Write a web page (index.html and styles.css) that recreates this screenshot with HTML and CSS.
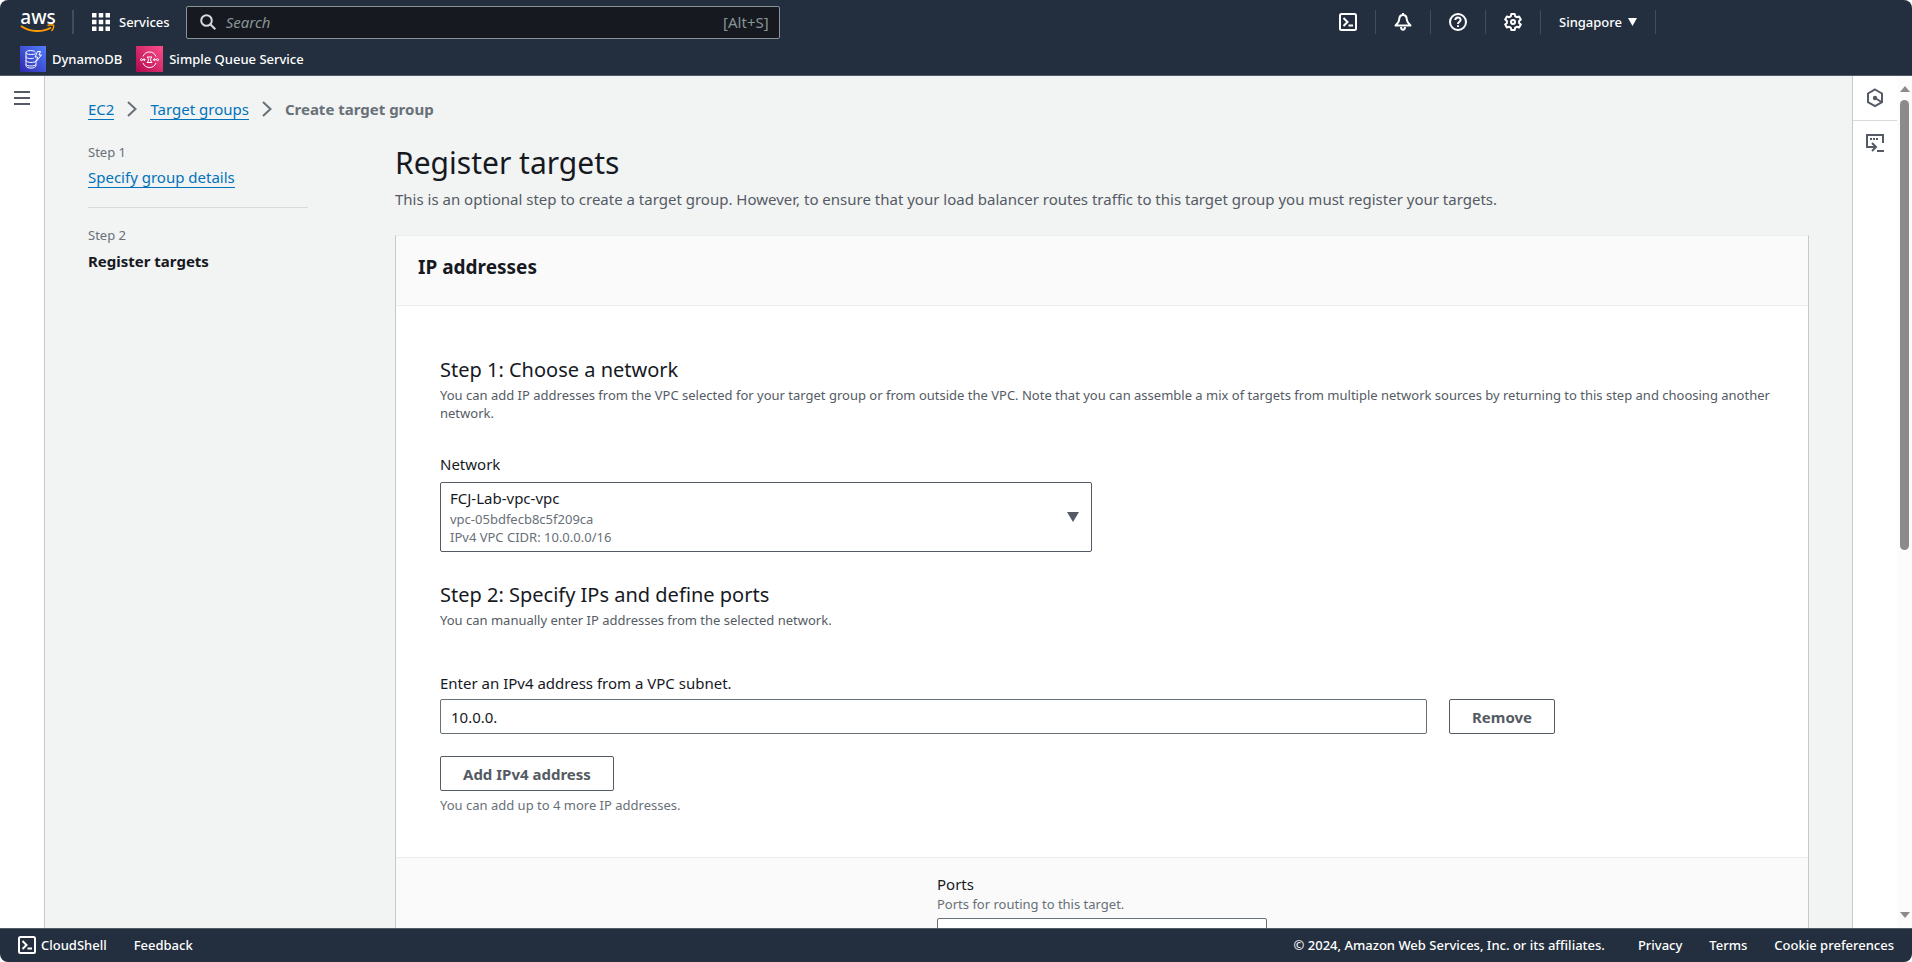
FILE: index.html
```html
<!DOCTYPE html>
<html lang="en">
<head>
<meta charset="utf-8">
<title>Create target group | EC2</title>
<link rel="stylesheet" href="styles.css">
</head>
<body>
<div class="app">
  <header class="header">
    <div class="navbar">
      <a class="logo" href="#" aria-label="aws home">
        <span class="logo-word">aws</span>
        <svg class="logo-smile" width="36" height="10" viewBox="0 0 36 10" fill="none" stroke="#ff9900"><path d="M1 2C10 8.500 23 8.500 31 3.500" stroke-width="2"/><path d="M27.500 1.500C30 .8 32.500.8 33.500 1.200C34 3 33 5.500 31.500 7" stroke-width="1.500"/></svg>
      </a>
      <button class="services" type="button">
        <svg width="18" height="18" viewBox="0 0 18 18" fill="#fff"><path d="M0 0h4.500v4.500H0zM6.750 0h4.500v4.500h-4.500zM13.500 0H18v4.500h-4.500zM0 6.750h4.500v4.500H0zM6.750 6.750h4.500v4.500h-4.500zM13.500 6.750H18v4.500h-4.500zM0 13.500h4.500V18H0zM6.750 13.500h4.500V18h-4.500zM13.500 13.500H18V18h-4.500z"/></svg>
        Services
      </button>
      <label class="search">
        <svg width="16" height="16" viewBox="0 0 16 16" fill="none" stroke="#d5dbdb" stroke-width="2"><circle cx="6.500" cy="6.500" r="5.300"/><path d="M10.300 10.300L15.300 15.300"/></svg>
        <input class="search-input" type="search" placeholder="Search" aria-label="Search">
        <span class="search-key">[Alt+S]</span>
      </label>
      <div class="tools">
        <button class="tool" type="button" aria-label="CloudShell"><svg width="18" height="18" viewBox="0 0 18 18" fill="none" stroke="#fff" stroke-width="2"><rect x="1" y="1" width="16" height="16" rx="1.500"/><path d="M4.500 5L8.500 9L4.500 13M9.500 12.500H14"/></svg></button>
        <button class="tool" type="button" aria-label="Notifications"><svg width="18" height="18" viewBox="0 0 18 18" fill="none" stroke="#fff" stroke-width="2" stroke-linejoin="round"><path d="M9 0V3M9 2C6.500 2 5.300 3.800 5.200 6.500C5 9 4.300 9.800 1.500 12.500H16.500C13.700 9.800 13 9 12.800 6.500C12.700 3.800 11.500 2 9 2ZM7 14C7.200 17.700 10.800 17.700 11 14"/></svg></button>
        <button class="tool" type="button" aria-label="Help"><svg width="18" height="18" viewBox="0 0 18 18" fill="none" stroke="#fff" stroke-width="2"><circle cx="9" cy="9" r="8"/><path d="M6.300 7C6.400 3.500 11.700 3.700 11.600 7C11.500 8.800 9 8.700 9 11M9 12.200V14"/></svg></button>
        <button class="tool" type="button" aria-label="Settings"><svg width="18" height="18" viewBox="0 0 18 18" fill="none" stroke="#fff" stroke-width="2" stroke-linejoin="round"><path d="M7.300 1H10.700L11.200 3.300L12.800 4.200L15.100 3.500L16.800 6.400L15.100 8V10L16.800 11.600L15.100 14.500L12.800 13.800L11.200 14.700L10.700 17H7.300L6.800 14.700L5.200 13.800L2.900 14.500L1.200 11.600L2.900 10V8L1.200 6.400L2.900 3.500L5.200 4.200L6.800 3.300Z"/><circle cx="9" cy="9" r="2"/></svg></button>
        <button class="region" type="button">Singapore <svg width="9" height="8" viewBox="0 0 9 8" fill="#fff"><path d="M0 0H9L4.500 8z"/></svg></button>
      </div>
    </div>
    <nav class="favorites" aria-label="Favorites">
      <a class="favorite" href="#">
        <svg width="26" height="26" viewBox="0 0 26 26" fill="none" stroke="#fff"><defs><linearGradient id="db" x1="0" y1="1" x2="1" y2="0"><stop stop-color="#2e27ad"/><stop offset="1" stop-color="#527fff"/></linearGradient></defs><path fill="url(#db)" stroke="none" d="M0 0h26v26H0z"/><path d="M15.500 6C14 4 6 4 6 6.500S14 9 15.500 7.500M6 6.500V19.500C6 23 16 23 16 19.500V14.500M6 10.500C6.500 13 13 13 14 12M6 14.500C6.500 17 15 17 16 15M6 18.500C6.500 20.500 15 20.500 16 18.500"/><path d="M17.500 5.500H20.500L19 9H21.500L16.500 15L17.500 11H15Z"/></svg>
        DynamoDB</a>
      <a class="favorite" href="#">
        <svg width="27" height="26" viewBox="0 0 27 26" fill="none" stroke="#fff"><defs><linearGradient id="sq" x1="0" y1="1" x2="1" y2="0"><stop stop-color="#b0084d"/><stop offset="1" stop-color="#ff4f8b"/></linearGradient></defs><path fill="url(#sq)" stroke="none" d="M0 0h27v26H0z"/><path d="M7 10.500C9 4.500 18 4.500 20 10.500M7 17C9 23 18 23 20 17M6.500 13.700H9M7.800 12.300L9.200 13.700L7.800 15.100M17.500 13.700H20M18.800 12.300L17.400 13.700L18.800 15.100"/><circle cx="5.500" cy="13.700" r="1"/><circle cx="21.500" cy="13.700" r="1"/><path d="M11 11H16L14.700 12.500V15L16 16.500H11L12.300 15V12.500Z"/></svg>
        Simple Queue Service</a>
    </nav>
  </header>

  <div class="body">
    <aside class="rail rail-left">
      <button class="rail-button" type="button" aria-label="Open navigation"><svg width="16" height="14" viewBox="0 0 16 14" stroke="#545b64" stroke-width="2"><path d="M0 1H16M0 7H16M0 13H16"/></svg></button>
    </aside>

    <main class="main">
      <nav class="crumbs" aria-label="Breadcrumb">
        <a class="link" href="#">EC2</a>
        <svg width="10" height="16" viewBox="0 0 10 16" fill="none" stroke="#687078" stroke-width="2"><path d="M1 1L8.500 8L1 15"/></svg>
        <a class="link" href="#">Target groups</a>
        <svg width="10" height="16" viewBox="0 0 10 16" fill="none" stroke="#687078" stroke-width="2"><path d="M1 1L8.500 8L1 15"/></svg>
        <span class="crumb-current">Create target group</span>
      </nav>
      <div class="columns">
        <ol class="steps">
          <li class="step"><span class="step-number">Step 1</span><a class="link" href="#">Specify group details</a></li>
          <li class="step"><span class="step-number">Step 2</span><strong class="step-current">Register targets</strong></li>
        </ol>
        <div class="content">
          <h1 class="title">Register targets</h1>
          <p class="intro">This is an optional step to create a target group. However, to ensure that your load balancer routes traffic to this target group you must register your targets.</p>
          <section class="card">
            <h2 class="card-header">IP addresses</h2>
            <div class="card-body">
              <h3 class="subtitle">Step 1: Choose a network</h3>
              <p class="hint">You can add IP addresses from the VPC selected for your target group or from outside the VPC. Note that you can assemble a mix of targets from multiple network sources by returning to this step and choosing another network.</p>
              <label class="label label-network" for="network">Network</label>
              <div class="picker">
                <select class="picker-select" id="network"><option>FCJ-Lab-vpc-vpc</option></select>
                <div class="picker-value">
                  <span class="picker-name">FCJ-Lab-vpc-vpc</span>
                  <span class="picker-meta">vpc-05bdfecb8c5f209ca</span>
                  <span class="picker-meta">IPv4 VPC CIDR: 10.0.0.0/16</span>
                </div>
                <svg class="picker-arrow" width="12" height="10" viewBox="0 0 12 10" fill="#545b64"><path d="M0 0H12L6 10z"/></svg>
              </div>
              <h3 class="subtitle subtitle-ports">Step 2: Specify IPs and define ports</h3>
              <p class="hint">You can manually enter IP addresses from the selected network.</p>
              <label class="label label-address" for="address">Enter an IPv4 address from a VPC subnet.</label>
              <div class="address-row">
                <input class="input" id="address" type="text" value="10.0.0.">
                <div><button class="button" type="button">Remove</button></div>
              </div>
              <button class="button button-add" type="button">Add IPv4 address</button>
              <p class="hint hint-add">You can add up to 4 more IP addresses.</p>
            </div>
            <div class="card-footer">
              <div class="ports">
                <label class="label" for="ports">Ports</label>
                <p class="hint hint-muted">Ports for routing to this target.</p>
                <input class="input" id="ports" type="text">
              </div>
            </div>
          </section>
        </div>
      </div>
    </main>

    <aside class="rail rail-right">
      <button class="rail-button rail-tool" type="button" aria-label="Info"><svg width="18" height="20" viewBox="0 0 18 20" fill="none" stroke="#545b64" stroke-width="2"><path d="M9 1.500L16 5.500V14.200L9 18.200L2 14.200V5.500Z"/><circle cx="9" cy="10" r="2.200" fill="#545b64" stroke="none"/><path d="M9 10L15.500 14"/></svg></button>
      <button class="rail-button rail-tool" type="button" aria-label="Console to code"><svg width="18" height="20" viewBox="0 0 18 20" fill="none" stroke="#545b64" stroke-width="2"><path d="M17 10V2H1V14H9M6 10L10 14L6 18M11 18H18"/><path d="M4 6H13" stroke-dasharray="2 1"/></svg></button>
    </aside>
    <div class="scrollbar">
      <svg width="10" height="6" viewBox="0 0 10 6" fill="#8b8b8b"><path d="M0 6L5 0L10 6z"/></svg>
      <div class="track"><div class="thumb"></div></div>
      <svg width="10" height="6" viewBox="0 0 10 6" fill="#8b8b8b"><path d="M0 0H10L5 6z"/></svg>
    </div>
  </div>

  <footer class="footer">
    <button class="footer-button" type="button"><svg width="18" height="18" viewBox="0 0 18 18" fill="none" stroke="#fff" stroke-width="2"><rect x="1" y="1" width="16" height="16" rx="1.500"/><path d="M4.500 5L8.500 9L4.500 13M9.500 12.500H14"/></svg>CloudShell</button>
    <a class="footer-link" href="#">Feedback</a>
    <span class="copyright">© 2024, Amazon Web Services, Inc. or its affiliates.</span>
    <a class="footer-link" href="#">Privacy</a>
    <a class="footer-link" href="#">Terms</a>
    <a class="footer-link" href="#">Cookie preferences</a>
  </footer>
</div>
</body>
</html>
```
FILE: styles.css
```css
* { box-sizing: border-box; }
body, h1, h2, h3, p, ol { margin: 0; padding: 0; }
body { background: #fff; color: #16191f; font: 15px/22px "Noto Sans", "Open Sans", sans-serif; }
button, input, select { font: inherit; }
svg { display: block; flex: none; }
a { text-decoration: none; }

.app { display: flex; flex-direction: column; height: 100vh; overflow: hidden; border-radius: 8px; }

/* Header */
.header { flex: none; background: #232f3e; border-bottom: 1px solid #545b64; color: #fff; font-size: 13px; font-weight: 500; line-height: 18px; }
.navbar { display: flex; align-items: center; height: 44px; padding-left: 20px; }
.logo { display: flex; flex-direction: column; justify-content: center; height: 24px; padding-right: 16px; border-right: 2px solid #414d5c; color: #fff; }
.logo-word { font: 500 19px/14px "Noto Sans", sans-serif; text-align: center; }
.services { display: flex; align-items: center; gap: 9px; margin-left: 18px; padding: 0; border: 0; background: none; color: inherit; }
.search { display: flex; align-items: center; gap: 8px; width: 594px; height: 33px; margin-left: 16px; padding: 0 10px 0 13px; border: 1px solid #879596; border-radius: 2px; background: #16191f; color: #879596; font-size: 15px; font-weight: 400; }
.search-input { flex: 1; min-width: 0; padding: 0 2px; border: 0; outline: 0; background: none; color: #fff; }
.search-input::placeholder { color: #879596; font-style: italic; opacity: 1; }
.tools { display: flex; align-items: center; margin-left: auto; margin-right: 256px; }
.tool { display: flex; justify-content: center; width: 55px; padding: 3px 0; border: 0; border-right: 1px solid #414d5c; background: none; }
.region { display: flex; align-items: center; gap: 6px; height: 24px; padding: 0 18px; border: 0; border-right: 1px solid #414d5c; background: none; color: inherit; }
.favorites { display: flex; align-items: center; gap: 14px; height: 31px; padding: 0 20px 1px; }
.favorite { display: flex; align-items: center; gap: 6px; color: #fff; }

/* Page frame */
.body { display: flex; flex: 1; min-height: 0; background: #f2f3f3; }
.rail { flex: none; width: 45px; background: #fff; }
.rail-left { border-right: 1px solid #c6cacb; }
.rail-right { border-left: 1px solid #c6cacb; }
.rail-button { display: flex; align-items: center; justify-content: center; width: 100%; height: 44px; padding: 0; border: 0; background: none; }
.rail-tool:first-child { height: 45px; border-bottom: 1px solid #d5dbdb; }
.scrollbar { display: flex; flex: none; flex-direction: column; align-items: center; gap: 8px; width: 15px; padding: 10px 0; background: #fcfcfc; }
.track { flex: 1; width: 9px; }
.thumb { height: 56%; border-radius: 5px; background: #8b8b8b; }
.main { flex: 1; min-width: 0; padding: 21px 43px 0; overflow: hidden; }

.link { color: #0073bb; border-bottom: 1px solid #0073bb; line-height: 20px; }
.crumbs { display: flex; align-items: center; gap: 13px; height: 24px; color: #687078; }
.crumb-current { font-weight: 700; }
.columns { display: flex; gap: 87px; margin-top: 20px; }
.steps { flex: none; width: 220px; list-style: none; }
.step { display: flex; flex-direction: column; align-items: flex-start; gap: 4px; }
.step + .step { margin-top: 19px; padding-top: 16px; border-top: 1px solid #d5dbdb; }
.step-number { color: #687078; font-size: 13px; line-height: 22px; }
.content { flex: 1; min-width: 0; }
.title { font-size: 30px; font-weight: 400; line-height: 44px; }
.intro { margin-top: 3px; color: #545b64; }

.card { margin-top: 25px; border: 1px solid #c6cacb; border-top-color: #eaeded; background: #fff; }
.card-header { padding: 20px 22px 27px; border-bottom: 1px solid #eaeded; background: #fafafa; font-size: 19px; font-weight: 700; line-height: 22px; }
.card-body { padding: 51px 30px 43px 44px; }
.subtitle { margin-bottom: 3px; font-size: 20px; font-weight: 400; line-height: 26px; }
.subtitle-ports { margin-top: 30px; }
.hint { color: #545b64; font-size: 13px; line-height: 18px; }
.hint-muted { color: #687078; }
.hint-add { margin-top: 5px; color: #687078; }
.label { display: block; line-height: 22px; }
.label-network { margin-top: 31px; }
.label-address { margin-top: 43px; }
.picker { display: grid; width: 652px; max-width: 100%; margin-top: 7px; align-items: center; }
.picker-select, .picker-value, .picker-arrow { grid-area: 1 / 1; }
.picker-select { width: 100%; height: 100%; border: 1px solid #545b64; border-radius: 2px; appearance: none; background: #fff; color: transparent; }
.picker-value { display: flex; flex-direction: column; padding: 5px 10px 6px; pointer-events: none; }
.picker-meta { color: #687078; font-size: 13px; line-height: 18px; }
.picker-name { line-height: 23px; }
.picker-arrow { justify-self: end; margin-right: 13px; pointer-events: none; }
.address-row { display: grid; grid-template-columns: 3fr 1fr; gap: 22px; margin-top: 5px; }
.input { width: 100%; height: 35px; padding: 0 10px; border: 1px solid #687078; border-radius: 2px; background: #fff; color: #16191f; }
.button { height: 35px; padding: 0 22px; border: 1px solid #545b64; border-radius: 2px; background: #fff; color: #545b64; font-weight: 700; }
.button-add { margin-top: 22px; }
.card-footer { display: grid; grid-template-columns: 1fr 330px 1fr; padding: 15px 22px 40px; border-top: 1px solid #eaeded; background: #fafafa; }
.ports { grid-column: 2; }
.ports .input { margin-top: 5px; }

/* Footer */
.footer { display: flex; flex: none; align-items: center; gap: 27px; height: 34px; padding: 0 18px 1px; border-top: 1px solid #545b64; background: #232f3e; color: #fff; font-size: 13px; font-weight: 500; line-height: 18px; }
.footer-button { display: flex; align-items: center; gap: 5px; padding: 0; border: 0; background: none; color: inherit; }
.footer-link { color: #fff; }
.copyright { margin-left: auto; margin-right: 6px; }
```
